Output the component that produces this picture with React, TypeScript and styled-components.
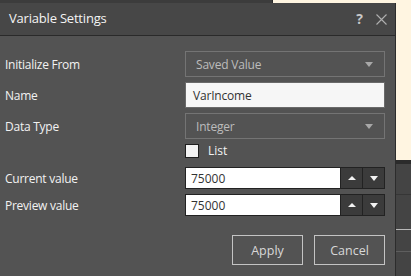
import React from "react";
import styled, { createGlobalStyle } from "styled-components";

const GlobalStyle = createGlobalStyle`
  html, body {
    margin: 0;
    padding: 0;
    width: 411px;
    height: 276px;
    overflow: hidden;
    font-family: "Open Sans", "Noto Sans", sans-serif;
  }
`;

const Desktop = styled.div`
  position: relative;
  width: 411px;
  height: 276px;
  display: flex;
  overflow: hidden;
`;

const HostPane = styled.div`
  width: 273px;
  height: 100%;
  background: #3c3c3c;
  border-right: 1px solid #2a2a2a;
  box-sizing: border-box;
`;

const SidePane = styled.div`
  flex: 1;
  display: flex;
  flex-direction: column;
`;

const Note = styled.div`
  height: 160px;
  background: #fff5e1;
`;

const Sheet = styled.div`
  flex: 1;
  background: #444444;
  border-top: 4px solid #2b2b2b;
  display: flex;
  flex-direction: column;
`;

const SheetRow = styled.div<{ $h: number; $line: string }>`
  height: ${(p) => p.$h}px;
  border-bottom: 1px solid ${(p) => p.$line};
`;

const Window = styled.div`
  position: absolute;
  left: 0;
  top: 3px;
  width: 396px;
  height: 273px;
  background: #535353;
  border-right: 1px solid #2c2c2c;
  box-sizing: border-box;
  display: flex;
  flex-direction: column;
`;

const TitleBar = styled.div`
  height: 33px;
  box-sizing: border-box;
  background: #474747;
  border-bottom: 1px solid #2a2a2a;
  display: flex;
  align-items: center;
  padding: 0 8px 0 9px;
`;

const Title = styled.div`
  flex: 1;
  color: #f4f4f4;
  font-size: 13px;
  letter-spacing: -0.2px;
  padding-bottom: 2px;
`;

const Help = styled.span`
  color: #c8c8c8;
  font-weight: 700;
  font-size: 14px;
  margin-right: 13px;
  padding-bottom: 2px;
`;

const Body = styled.div`
  flex: 1;
  padding: 15px 10px 0 5px;
  display: flex;
  flex-direction: column;
`;

const Form = styled.div`
  display: grid;
  grid-template-columns: 180px 200px;
  row-gap: 5px;
  align-items: center;
`;

const Label = styled.div`
  color: #f2f2f2;
  font-size: 12px;
  letter-spacing: -0.25px;
`;

const Select = styled.div`
  height: 26px;
  box-sizing: border-box;
  border: 1px solid #747474;
  display: flex;
  align-items: center;
  justify-content: space-between;
  padding: 0 11px 0 10px;
  color: #bcbcbc;
  font-size: 12px;
  letter-spacing: -0.2px;
`;

const Caret = styled.span<{ $color: string }>`
  width: 0;
  height: 0;
  border-left: 4.5px solid transparent;
  border-right: 4.5px solid transparent;
  border-top: 5px solid ${(p) => p.$color};
`;

const CaretUp = styled.span`
  width: 0;
  height: 0;
  border-left: 4px solid transparent;
  border-right: 4px solid transparent;
  border-bottom: 4px solid #f2f2f2;
`;

const TextBox = styled.div`
  height: 26px;
  box-sizing: border-box;
  background: #f6f6f6;
  border: 1px solid #6a6a6a;
  display: flex;
  align-items: center;
  padding: 0 7px;
  color: #333;
  font-size: 12px;
  letter-spacing: -0.2px;
`;

const CheckRow = styled.div`
  display: flex;
  align-items: center;
  gap: 9px;
  margin-top: -2px;
  margin-bottom: 3px;
  color: #f2f2f2;
  font-size: 12px;
`;

const Box = styled.span`
  width: 14px;
  height: 14px;
  box-sizing: border-box;
  background: #f2f2f2;
  border: 1px solid #1e1e1e;
`;

const Spinner = styled.div`
  height: 22px;
  display: flex;
  box-sizing: border-box;
  border: 1px solid #222;
`;

const SpinValue = styled.div`
  flex: 1;
  background: #fff;
  display: flex;
  align-items: center;
  padding: 0 5px;
  color: #333;
  font-size: 12px;
`;

const SpinButton = styled.div`
  width: 21px;
  background: #3b3b3b;
  border-left: 1px solid #222;
  display: flex;
  align-items: center;
  justify-content: center;
`;

const Actions = styled.div`
  margin-top: 19px;
  display: flex;
  justify-content: flex-end;
  gap: 11px;
`;

const Button = styled.div`
  width: 71px;
  height: 30px;
  box-sizing: border-box;
  border: 1px solid #c4c4c4;
  display: flex;
  align-items: center;
  justify-content: center;
  color: #d8d8d8;
  font-size: 12.5px;
`;

function NumberField({ value }: { value: string }) {
  return (
    <Spinner>
      <SpinValue>{value}</SpinValue>
      <SpinButton>
        <CaretUp />
      </SpinButton>
      <SpinButton>
        <Caret $color="#f2f2f2" />
      </SpinButton>
    </Spinner>
  );
}

export default function App() {
  return (
    <>
      <GlobalStyle />
      <Desktop>
        <HostPane />
        <SidePane>
          <Note />
          <Sheet>
            <SheetRow $h={30} $line="#363636" />
            <SheetRow $h={34} $line="#b8b8b8" />
            <SheetRow $h={21} $line="#5e5e5e" />
          </Sheet>
        </SidePane>

        <Window>
          <TitleBar>
            <Title>Variable Settings</Title>
            <Help>?</Help>
            <svg width="11" height="11" viewBox="0 0 11 11">
              <path d="M0.5 0.5 L10.5 10.5 M10.5 0.5 L0.5 10.5" stroke="#b0b0b0" strokeWidth="1.1" />
            </svg>
          </TitleBar>
          <Body>
            <Form>
              <Label>Initialize From</Label>
              <Select>
                Saved Value
                <Caret $color="#a8a8a8" />
              </Select>

              <Label>Name</Label>
              <TextBox>VarIncome</TextBox>

              <Label>Data Type</Label>
              <Select>
                Integer
                <Caret $color="#a8a8a8" />
              </Select>

              <span />
              <CheckRow>
                <Box />
                List
              </CheckRow>

              <Label>Current value</Label>
              <NumberField value="75000" />

              <Label>Preview value</Label>
              <NumberField value="75000" />
            </Form>
            <Actions>
              <Button>Apply</Button>
              <Button>Cancel</Button>
            </Actions>
          </Body>
        </Window>
      </Desktop>
    </>
  );
}
